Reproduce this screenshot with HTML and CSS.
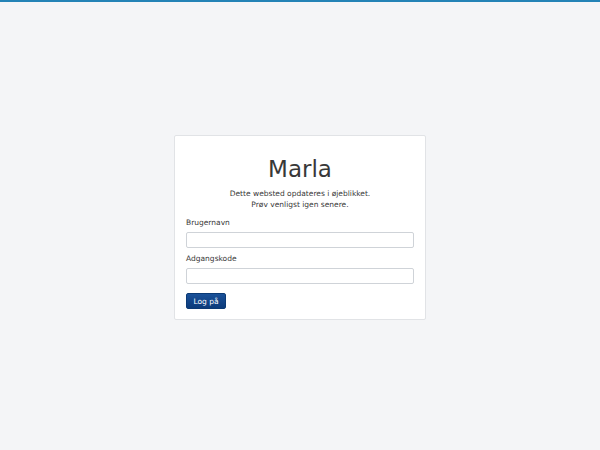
FILE: index.html
```html
<!DOCTYPE html>
<html lang="da">
<head>
<meta charset="utf-8">
<title>Marla</title>
<link rel="stylesheet" href="styles.css">
</head>
<body>
<div class="topbar"></div>
<main class="page">
  <div class="card">
    <h1 class="title">Marla</h1>
    <p class="message">Dette websted opdateres i øjeblikket.<br>Prøv venligst igen senere.</p>
    <form class="form">
      <label class="label" for="u">Brugernavn</label>
      <input class="input" id="u" type="text">
      <label class="label" for="p">Adgangskode</label>
      <input class="input" id="p" type="password">
      <button class="btn" type="button">Log på</button>
    </form>
  </div>
</main>
</body>
</html>
```
FILE: styles.css
```css
html, body {
  margin: 0;
  padding: 0;
}
body {
  background: #f4f5f7;
  font-family: "DejaVu Sans", sans-serif;
  color: #2b2b2b;
  height: 450px;
  overflow: hidden;
}
.topbar {
  height: 2px;
  background: #2383b6;
}
.page {
  display: flex;
  justify-content: center;
  padding-top: 133px;
}
.card {
  box-sizing: border-box;
  width: 252px;
  height: 185px;
  background: #ffffff;
  border: 1px solid #e1e3e6;
  border-radius: 2px;
  padding: 11px 11px;
}
.title {
  margin: 6px 0 0;
  font-size: 23px;
  font-weight: normal;
  text-align: center;
  line-height: 32px;
  color: #383838;
}
.message {
  margin: 3px 0 0;
  font-size: 7.5px;
  line-height: 11px;
  text-align: center;
  color: #383838;
}
.form {
  display: flex;
  flex-direction: column;
  align-items: flex-start;
  margin-top: 7px;
}
.label {
  font-size: 7.5px;
  line-height: 11px;
  color: #383838;
  margin-bottom: 4px;
}
.input {
  box-sizing: border-box;
  width: 100%;
  height: 16px;
  margin: 0 0 5px;
  border: 1px solid #cfd3d8;
  border-radius: 2px;
  background: #fff;
  padding: 0 4px;
}
.btn {
  margin-top: 4px;
  width: 40px;
  height: 16px;
  border: 1px solid #0b3a75;
  border-radius: 2px;
  background: linear-gradient(#1a5199, #0c3b7a);
  color: #fff;
  font-family: "DejaVu Sans", sans-serif;
  font-size: 7.5px;
  padding: 0;
}
```
